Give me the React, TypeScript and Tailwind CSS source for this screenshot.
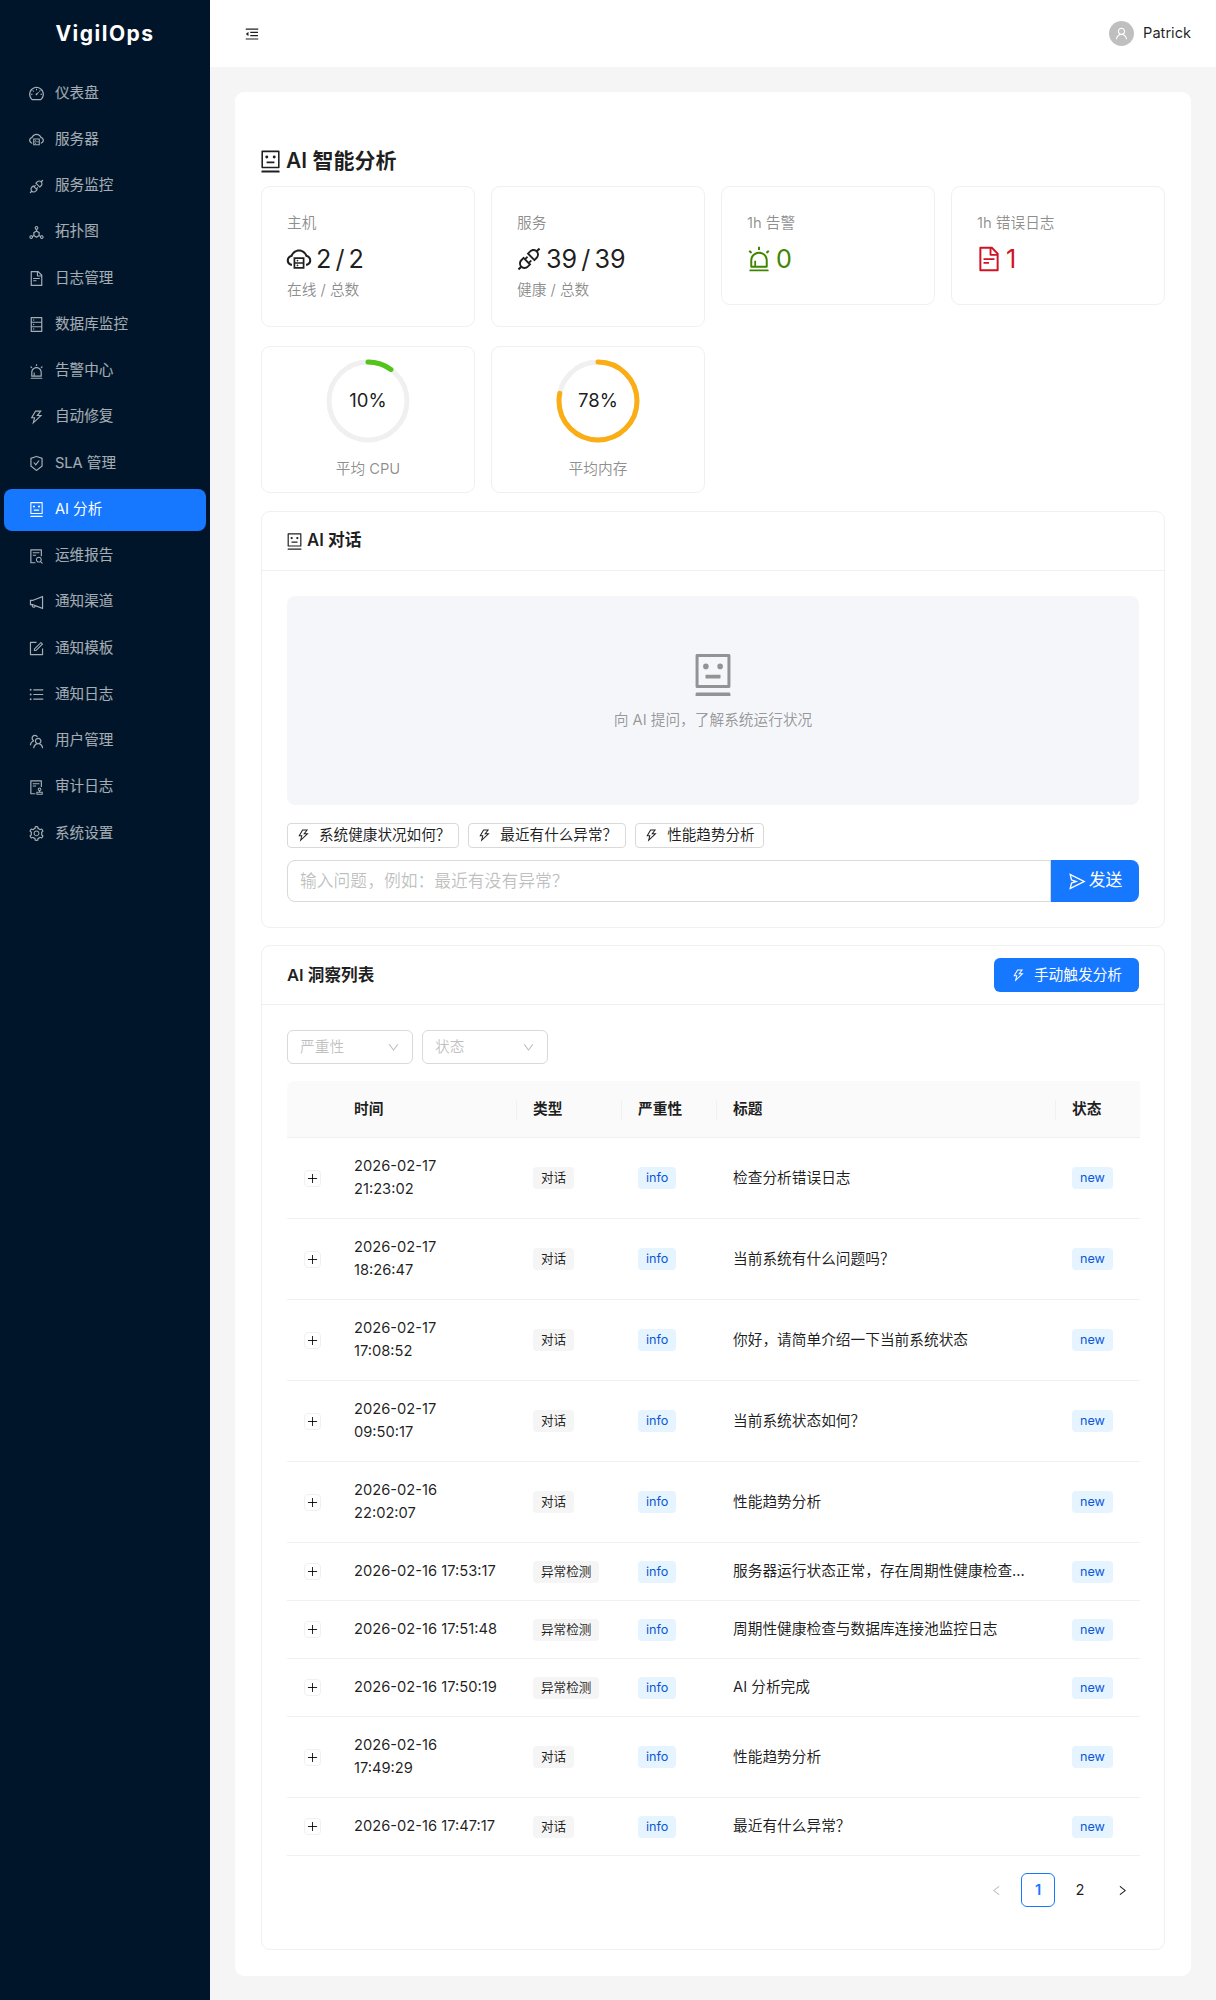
import React from "react";
import {
  AiOutlineDashboard,
  AiOutlineCloudServer,
  AiOutlineApi,
  AiOutlineDeploymentUnit,
  AiOutlineFileText,
  AiOutlineDatabase,
  AiOutlineAlert,
  AiOutlineThunderbolt,
  AiOutlineSafetyCertificate,
  AiOutlineRobot,
  AiOutlineFileSearch,
  AiOutlineNotification,
  AiOutlineForm,
  AiOutlineUnorderedList,
  AiOutlineTeam,
  AiOutlineAudit,
  AiOutlineSetting,
  AiOutlineMenuFold,
  AiOutlineUser,
  AiOutlineSend,
  AiOutlineDown,
  AiOutlineLeft,
  AiOutlineRight,
  AiOutlinePlus,
} from "react-icons/ai";

const menu = [
  { icon: AiOutlineDashboard, label: "仪表盘" },
  { icon: AiOutlineCloudServer, label: "服务器" },
  { icon: AiOutlineApi, label: "服务监控" },
  { icon: AiOutlineDeploymentUnit, label: "拓扑图" },
  { icon: AiOutlineFileText, label: "日志管理" },
  { icon: AiOutlineDatabase, label: "数据库监控" },
  { icon: AiOutlineAlert, label: "告警中心" },
  { icon: AiOutlineThunderbolt, label: "自动修复" },
  { icon: AiOutlineSafetyCertificate, label: "SLA 管理" },
  { icon: AiOutlineRobot, label: "AI 分析", active: true },
  { icon: AiOutlineFileSearch, label: "运维报告" },
  { icon: AiOutlineNotification, label: "通知渠道" },
  { icon: AiOutlineForm, label: "通知模板" },
  { icon: AiOutlineUnorderedList, label: "通知日志" },
  { icon: AiOutlineTeam, label: "用户管理" },
  { icon: AiOutlineAudit, label: "审计日志" },
  { icon: AiOutlineSetting, label: "系统设置" },
];

const rows = [
  { time: ["2026-02-17", "21:23:02"], type: "对话", title: "检查分析错误日志" },
  { time: ["2026-02-17", "18:26:47"], type: "对话", title: "当前系统有什么问题吗？" },
  { time: ["2026-02-17", "17:08:52"], type: "对话", title: "你好，请简单介绍一下当前系统状态" },
  { time: ["2026-02-17", "09:50:17"], type: "对话", title: "当前系统状态如何？" },
  { time: ["2026-02-16", "22:02:07"], type: "对话", title: "性能趋势分析" },
  { time: ["2026-02-16 17:53:17"], type: "异常检测", title: "服务器运行状态正常，存在周期性健康检查..." },
  { time: ["2026-02-16 17:51:48"], type: "异常检测", title: "周期性健康检查与数据库连接池监控日志" },
  { time: ["2026-02-16 17:50:19"], type: "异常检测", title: "AI 分析完成" },
  { time: ["2026-02-16", "17:49:29"], type: "对话", title: "性能趋势分析" },
  { time: ["2026-02-16 17:47:17"], type: "对话", title: "最近有什么异常？" },
];

const cardBorder = "border border-[#f0f0f0] rounded-[9px] bg-white";

function Sidebar() {
  return (
    <aside className="w-[210px] shrink-0 bg-[#001529]">
      <div className="h-[68px] flex items-center justify-center text-white text-[21px] font-bold tracking-[1.5px]">
        VigilOps
      </div>
      <nav className="px-1 pt-[4.5px]">
        {menu.map((m) => (
          <div
            key={m.label}
            className={
              "h-[42px] mb-[4.25px] pl-[24px] flex items-center gap-[10px] rounded-[8px] text-[14.6px] " +
              (m.active ? "bg-[#1677ff] text-white" : "text-white/65")
            }
          >
            <m.icon className="text-[17px] shrink-0" />
            <span>{m.label}</span>
          </div>
        ))}
      </nav>
    </aside>
  );
}

function StatCard({ label, icon, value, sub, color }: any) {
  return (
    <div className={cardBorder + " p-[25px] self-start"}>
      <div className="text-[14.7px] leading-[22px] text-black/45 mb-[5px]">{label}</div>
      <div className={"flex items-center text-[25.2px] leading-[40px] [word-spacing:-3px] " + color}>
        <span className="-ml-[2px] mr-[3px] text-[28px]">{icon}</span>
        {value}
      </div>
      {sub && <div className="text-[14.7px] leading-[22px] text-black/45">{sub}</div>}
    </div>
  );
}

function Ring({ percent, color, label }: any) {
  const r = 39;
  const c = 2 * Math.PI * r;
  return (
    <div className={cardBorder + " pt-[12px] pb-[12px] flex flex-col items-center"}>
      <div className="relative w-[84px] h-[84px]">
        <svg width="84" height="84" viewBox="0 0 84 84" className="-rotate-90">
          <circle cx="42" cy="42" r={r} fill="none" stroke="#f0f0f0" strokeWidth="5" />
          <circle
            cx="42"
            cy="42"
            r={r}
            fill="none"
            stroke={color}
            strokeWidth="5"
            strokeLinecap="round"
            strokeDasharray={`${(c * percent) / 100} ${c}`}
          />
        </svg>
        <div className="absolute inset-0 flex items-center justify-center text-[18.5px] text-black/90">
          {percent}%
        </div>
      </div>
      <div className="mt-[15px] text-[14.7px] leading-[22px] text-black/45">{label}</div>
    </div>
  );
}

function Chip({ children }: any) {
  return (
    <button className="h-[25px] px-[8px] flex items-center gap-[8px] border border-[#d9d9d9] rounded-[4px] bg-white text-[14.6px] text-black/88 whitespace-nowrap">
      <AiOutlineThunderbolt className="text-[15px]" />
      {children}
    </button>
  );
}

function Select({ label }: any) {
  return (
    <div className="w-[126px] h-[34px] px-[12px] flex items-center justify-between border border-[#d9d9d9] rounded-[6px] text-[14.7px] text-black/25">
      <span>{label}</span>
      <AiOutlineDown className="text-[13px]" />
    </div>
  );
}

function Tag({ children, blue }: any) {
  return (
    <span
      className={
        "inline-block h-[22px] px-[8px] rounded-[4px] text-[12.6px] leading-[22px] align-middle " +
        (blue ? "bg-[#e6f4ff] text-[#0958d9]" : "bg-[#f5f5f5] text-black/88")
      }
    >
      {children}
    </span>
  );
}

function Th({ children, sep }: any) {
  return (
    <th className="relative h-[57px] pl-[17px] text-left text-[14.7px] font-semibold text-black/88 bg-[#fafafa] border-b border-[#f0f0f0]">
      {sep && <span className="absolute left-0 top-[19px] h-[20px] w-px bg-[#f0f0f0]" />}
      {children}
    </th>
  );
}

function InsightTable() {
  return (
    <table className="w-full table-fixed border-separate border-spacing-0 text-[14.7px]">
      <colgroup>
        <col className="w-[50px]" />
        <col className="w-[179px]" />
        <col className="w-[105px]" />
        <col className="w-[95px]" />
        <col className="w-[339px]" />
        <col className="w-[85px]" />
      </colgroup>
      <thead>
        <tr>
          <th className="bg-[#fafafa] border-b border-[#f0f0f0] rounded-tl-[8px]" />
          <Th>时间</Th>
          <Th sep>类型</Th>
          <Th sep>严重性</Th>
          <Th sep>标题</Th>
          <Th sep>状态</Th>
        </tr>
      </thead>
      <tbody>
        {rows.map((r, i) => (
          <tr key={i}>
            <td className="py-[17px] border-b border-[#f0f0f0] pl-[17px]">
              <span className="w-[17px] h-[17px] flex items-center justify-center border border-[#f0f0f0] rounded-[4px] text-black/88">
                <AiOutlinePlus className="text-[13px]" />
              </span>
            </td>
            <td className="py-[17px] pl-[17px] border-b border-[#f0f0f0] leading-[23px] text-black/88">
              {r.time.map((t) => (
                <div key={t}>{t}</div>
              ))}
            </td>
            <td className="py-[17px] pl-[17px] border-b border-[#f0f0f0]">
              <Tag>{r.type}</Tag>
            </td>
            <td className="py-[17px] pl-[17px] border-b border-[#f0f0f0]">
              <Tag blue>info</Tag>
            </td>
            <td className="py-[17px] pl-[17px] border-b border-[#f0f0f0] leading-[23px] text-black/88">{r.title}</td>
            <td className="py-[17px] pl-[17px] border-b border-[#f0f0f0]">
              <Tag blue>new</Tag>
            </td>
          </tr>
        ))}
      </tbody>
    </table>
  );
}

export default function App() {
  return (
    <div className="flex h-[2000px] font-['Inter','Noto_Sans_CJK_SC',sans-serif] text-[14.7px] bg-[#f5f5f5]">
      <Sidebar />
      <div className="flex-1 min-w-0 flex flex-col">
        <header className="h-[67px] bg-white pl-[34px] pr-[25px] flex items-center justify-between">
          <AiOutlineMenuFold className="text-[16px] text-black/88" />
          <div className="flex items-center gap-[9px]">
            <span className="w-[25px] h-[25px] rounded-full bg-black/25 flex items-center justify-center text-white">
              <AiOutlineUser className="text-[15px]" />
            </span>
            <span className="pt-px text-[14.6px] text-black/88">Patrick</span>
          </div>
        </header>
        <main className="px-[25px] pt-[25px]">
          <div className="bg-white rounded-[9px] px-[26px] pt-[53px] pb-[26px]">
            <h1 className="h-[32px] flex items-center gap-[3px] text-[21px] font-semibold text-black/88 mb-[9px]">
              <AiOutlineRobot className="text-[25px] -ml-[3px]" />
              AI 智能分析
            </h1>
            <div className="grid grid-cols-4 gap-x-[16px] gap-y-[19px]">
              <StatCard
                label="主机"
                icon={<AiOutlineCloudServer />}
                value="2 / 2"
                sub="在线 / 总数"
                color="text-black/88"
              />
              <StatCard
                label="服务"
                icon={<AiOutlineApi />}
                value="39 / 39"
                sub="健康 / 总数"
                color="text-black/88"
              />
              <StatCard label="1h 告警" icon={<AiOutlineAlert />} value="0" color="text-[#3f8600]" />
              <StatCard label="1h 错误日志" icon={<AiOutlineFileText />} value="1" color="text-[#cf1322]" />
              <Ring percent={10} color="#52c41a" label="平均 CPU" />
              <Ring percent={78} color="#faad14" label="平均内存" />
            </div>

            <section className={cardBorder + " mt-[18px]"}>
              <div className="h-[59px] px-[25px] flex items-center gap-[3px] border-b border-[#f0f0f0] text-[16.8px] font-semibold text-black/88">
                <AiOutlineRobot className="text-[19px] -ml-[2px]" />
                AI 对话
              </div>
              <div className="p-[25px]">
                <div className="h-[209px] rounded-[8px] bg-[#f5f6f9] flex flex-col items-center pt-[55px] text-black/40">
                  <AiOutlineRobot className="text-[48px]" />
                  <div className="mt-[10px] text-[14.7px] leading-[22px]">向 AI 提问，了解系统运行状况</div>
                </div>
                <div className="mt-[18px] flex gap-[9px]">
                  <Chip>系统健康状况如何？</Chip>
                  <Chip>最近有什么异常？</Chip>
                  <Chip>性能趋势分析</Chip>
                </div>
                <div className="mt-[12px] flex">
                  <input
                    className="flex-1 h-[42px] px-[12px] border border-[#d9d9d9] rounded-l-[8px] text-[16.8px] placeholder:text-black/25 outline-none"
                    placeholder="输入问题，例如：最近有没有异常？"
                  />
                  <button className="w-[88px] h-[42px] rounded-r-[8px] bg-[#1677ff] text-white text-[16.8px] flex items-center justify-center gap-[2px]">
                    <AiOutlineSend className="text-[19px]" />
                    发送
                  </button>
                </div>
              </div>
            </section>

            <section className={cardBorder + " mt-[17px]"}>
              <div className="h-[59px] px-[25px] flex items-center justify-between border-b border-[#f0f0f0]">
                <span className="pt-px text-[16.6px] font-semibold text-black/88">AI 洞察列表</span>
                <button className="w-[145px] h-[34px] rounded-[6px] bg-[#1677ff] text-white text-[14.7px] flex items-center justify-center gap-[8px]">
                  <AiOutlineThunderbolt className="text-[15px]" />
                  手动触发分析
                </button>
              </div>
              <div className="px-[25px] pt-[25px] pb-[42px]">
                <div className="flex gap-[9px] mb-[17px]">
                  <Select label="严重性" />
                  <Select label="状态" />
                </div>
                <InsightTable />
                <div className="mt-[17px] flex justify-end gap-[8px] text-[14.7px] text-black/88">
                  <span className="w-[34px] h-[34px] flex items-center justify-center text-black/25">
                    <AiOutlineLeft className="text-[13px]" />
                  </span>
                  <span className="w-[34px] h-[34px] flex items-center justify-center border border-[#1677ff] rounded-[6px] text-[#1677ff] font-semibold">
                    1
                  </span>
                  <span className="w-[34px] h-[34px] flex items-center justify-center">2</span>
                  <span className="w-[34px] h-[34px] flex items-center justify-center">
                    <AiOutlineRight className="text-[13px]" />
                  </span>
                </div>
              </div>
            </section>
          </div>
        </main>
      </div>
    </div>
  );
}
